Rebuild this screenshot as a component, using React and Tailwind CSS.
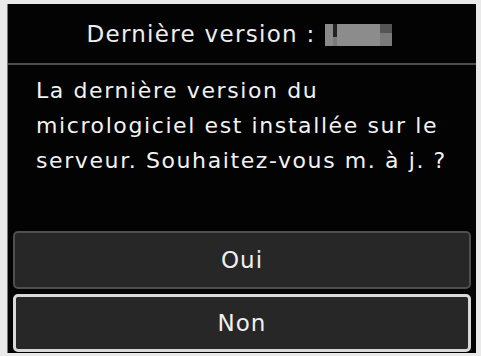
import React from 'react';

const font = { fontFamily: '"DejaVu Sans", "Liberation Sans", sans-serif' };

const App = () => {
  return (
    <div className="w-[481px] h-[356px] bg-[#e9e9e9] pl-[7px] pt-[4px] pr-[5px] pb-[3px]" style={font}>
      <div className="w-full h-full bg-[#030303] flex flex-col border-l border-[#777]">
        <div className="h-[61px] flex items-center justify-center border-b-2 border-[#4d4d4d] text-[#eeeeee] text-[23px] tracking-[1.3px] pt-[2px] pr-[6px]">
          <span>Dernière version :</span>
          <span className="ml-[9px] w-[67px] h-[22px] bg-[#7a7a7a] flex">
            <span className="w-[8px] h-full bg-[#8a8a8a]" />
            <span className="w-[4px] h-[13px] bg-[#222]" />
            <span className="flex-1 bg-[#8c8c8c]" />
            <span className="w-[12px] h-[9px] bg-[#555]" />
          </span>
        </div>
        <div className="pl-[28px] pt-[8px] text-[#f2f2f2] text-[22px] tracking-[1.6px] leading-[35px]">
          <p>La dernière version du</p>
          <p>micrologiciel est installée sur le</p>
          <p>serveur. Souhaitez-vous m. à j. ?</p>
        </div>
        <div className="mt-auto px-[5px] pb-[1px] flex flex-col gap-[5px]">
          <button className="h-[58px] rounded-[5px] bg-[#272727] border-2 border-[#4f4f4f] text-[#f0f0f0] text-[23px] tracking-[1px]" style={font}>
            Oui
          </button>
          <button className="h-[58px] rounded-[5px] bg-[#272727] border-[3px] border-[#d8d8d8] text-[#f0f0f0] text-[23px] tracking-[1px]" style={font}>
            Non
          </button>
        </div>
      </div>
    </div>
  );
};

export default App;
